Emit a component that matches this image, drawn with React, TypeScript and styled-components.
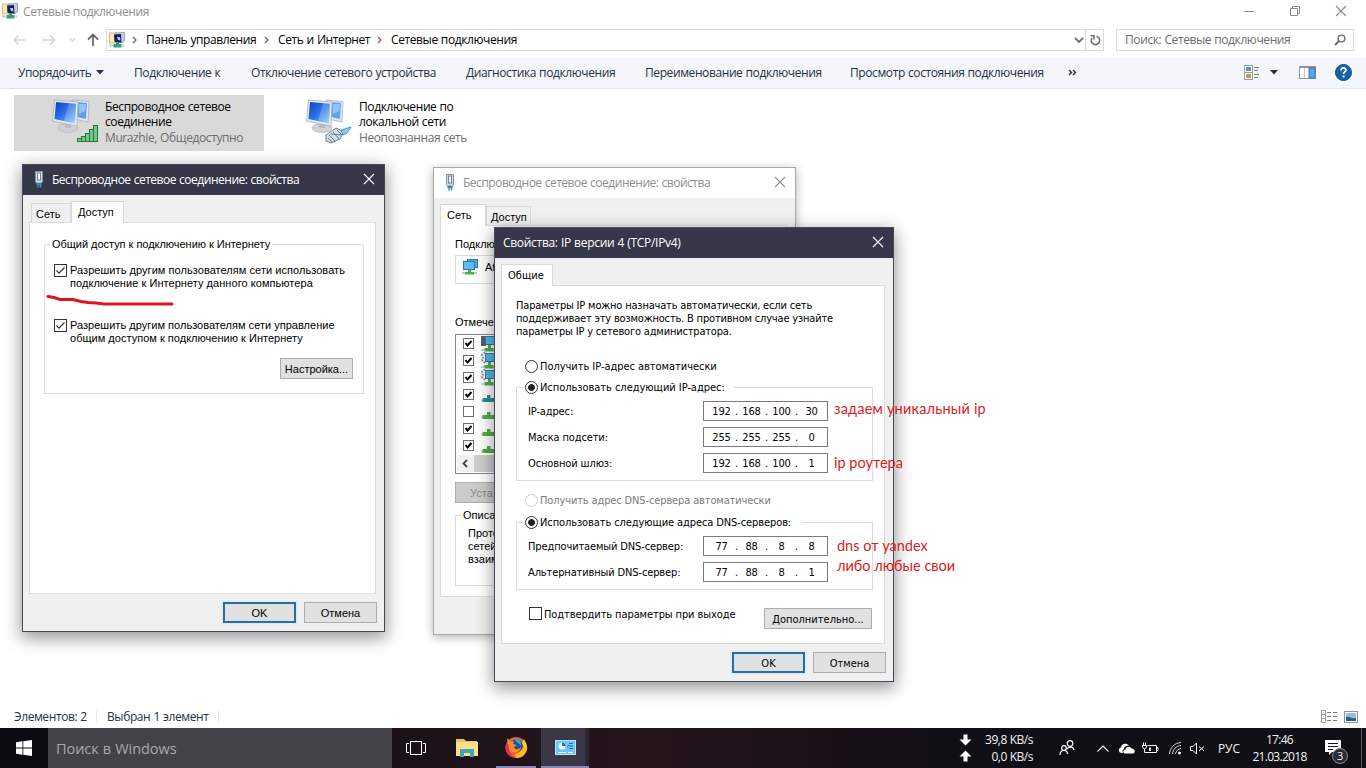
import React from "react";
import styled, { createGlobalStyle } from "styled-components";

const GlobalStyle = createGlobalStyle`
  * {
    box-sizing: border-box;
  }
  body {
    margin: 0;
    overflow: hidden;
  }
  svg {
    display: block;
    flex: none;
  }
`;

const segoe = `"Open Sans", "Noto Sans", sans-serif`;
const tahoma = `"DejaVu Sans Condensed", "DejaVu Sans", sans-serif`;
const msSans = `"Liberation Sans", Arial, sans-serif`;

const Desktop = styled.div`
  position: relative;
  display: flex;
  flex-direction: column;
  width: 1366px;
  height: 768px;
  overflow: hidden;
  background: #fff;
  font-family: ${segoe};
  font-size: 12px;
  letter-spacing: -0.4px;
  word-spacing: 0.4px;
  color: #111;
  white-space: nowrap;
`;

/* ---------- explorer window ---------- */

const Caption = styled.header`
  display: flex;
  align-items: center;
  height: 24px;
  padding: 0 19px 3px 2px;
  gap: 5px;
  color: #8f8f8f;
`;

const CaptionText = styled.span`
  padding-top: 2px;
`;

const WindowButtons = styled.div`
  display: flex;
  gap: 34px;
  margin-left: auto;
`;

const AddressRow = styled.div`
  display: flex;
  align-items: center;
  height: 34px;
  padding: 0 12px 2px 12px;
`;

const NavArrows = styled.div`
  display: flex;
  align-items: center;
  width: 94px;
`;

const AddressBox = styled.div`
  display: flex;
  align-items: center;
  width: 998px;
  height: 22px;
  border: 1px solid #d9d9d9;
  padding-left: 2px;
`;

const Crumb = styled.span<{ $w: number }>`
  width: ${(p) => p.$w}px;
  padding: 0 0 1px 9px;
  color: #000;
`;

const RefreshCell = styled.div`
  display: flex;
  align-items: center;
  justify-content: center;
  width: 18px;
  height: 20px;
  border-left: 1px solid #d9d9d9;
`;

const Chevron = styled.div`
  margin-left: auto;
  margin-right: 1px;
`;

const SearchBox = styled.div`
  display: flex;
  align-items: center;
  justify-content: space-between;
  width: 238px;
  height: 22px;
  margin-left: 12px;
  padding: 0 7px 1px 8px;
  border: 1px solid #d9d9d9;
  color: #6d6d6d;
`;

const CommandBar = styled.div`
  display: flex;
  align-items: center;
  height: 31px;
  padding: 0 14px 1px 18px;
  background: #f4f6f9;
  border-bottom: 1px solid #e3e5e8;
  color: #1e3248;
`;

const Command = styled.span<{ $w: number }>`
  display: flex;
  align-items: center;
  gap: 5px;
  width: ${(p) => p.$w}px;
`;

const ViewTools = styled.div`
  display: flex;
  align-items: center;
  margin-left: auto;
`;

const Gap = styled.span<{ $w: number }>`
  width: ${(p) => p.$w}px;
`;

const Items = styled.main`
  display: flex;
  flex: 1;
  align-items: flex-start;
  gap: 4px;
  padding: 6px 14px;
`;

const Item = styled.div<{ $selected?: boolean }>`
  display: flex;
  width: 250px;
  height: 56px;
  padding: 4px 0 0 38px;
  gap: 3px;
  background: ${(p) => (p.$selected ? "#d9d9d9" : "transparent")};
`;

const ItemText = styled.div`
  line-height: 15px;
  color: #000;
`;

const ItemNote = styled.div`
  line-height: 17px;
  color: #6d6d6d;
`;

const StatusBar = styled.footer`
  display: flex;
  align-items: center;
  height: 23px;
  padding: 0 8px 0 14px;
  color: #1e3248;
`;

const StatusCell = styled.span<{ $w: number }>`
  width: ${(p) => p.$w}px;
  height: 13px;
  line-height: 13px;
  margin-right: 10px;
  border-right: 1px solid #e9e9e9;
`;

/* ---------- taskbar ---------- */

const Taskbar = styled.div`
  display: flex;
  align-items: center;
  height: 40px;
  background: linear-gradient(90deg, #0c0b12 0 48px, #1b1218 392px, #24151b 650px, #1a1117 830px, #100f16 960px);
  color: #f2f2f2;
`;

const StartButton = styled.div`
  display: flex;
  justify-content: center;
  width: 48px;
`;

const TaskSearch = styled.div`
  display: flex;
  align-items: center;
  width: 344px;
  height: 40px;
  padding-left: 8px;
  background: #434247;
  color: #a9a9ac;
  font-size: 14.5px;
  letter-spacing: -0.05px;
`;

const TaskButton = styled.div<{ $w?: number; $open?: boolean; $active?: boolean }>`
  display: flex;
  align-items: center;
  justify-content: center;
  width: ${(p) => p.$w ?? 48}px;
  height: 40px;
  margin-right: ${(p) => (p.$open && !p.$active ? 5 : 0)}px;
  background: ${(p) =>
    p.$active ? "linear-gradient(90deg, #3b3747 44px, #2a2632 44px)" : "transparent"};
  border-bottom: ${(p) => (p.$open ? "2px solid #8d86b5" : "none")};
`;

const Tray = styled.div`
  display: flex;
  align-items: center;
  height: 40px;
  margin-left: auto;
`;

const TrayStack = styled.div<{ $w: number; $align: string; $ls?: number }>`
  width: ${(p) => p.$w}px;
  text-align: ${(p) => p.$align};
  line-height: 17px;
  font-size: 12px;
  letter-spacing: ${(p) => p.$ls ?? -0.5}px;
`;

const Notifications = styled.div`
  position: relative;
  width: 28px;
  height: 24px;
  margin-top: 7px;
`;

const Badge = styled.span`
  position: absolute;
  left: 7px;
  top: 8px;
  width: 16px;
  height: 16px;
  border: 1px solid #8b8b93;
  border-radius: 50%;
  background: #2b2a36;
  text-align: center;
  font-size: 11px;
  line-height: 14px;
`;

const ShowDesktop = styled.div`
  width: 5px;
  height: 40px;
  border-left: 1px solid #5b5a60;
`;

/* ---------- dialogs ---------- */

const Dialog = styled.section<{ $x: number; $y: number; $w: number; $h: number; $inactive?: boolean; $font: string }>`
  position: absolute;
  left: ${(p) => p.$x}px;
  top: ${(p) => p.$y}px;
  display: flex;
  flex-direction: column;
  width: ${(p) => p.$w}px;
  height: ${(p) => p.$h}px;
  border: 1px solid ${(p) => (p.$inactive ? "#a9a9a9" : "#47475a")};
  background: #f0f0f0;
  box-shadow: ${(p) =>
    p.$inactive ? "0 2px 9px rgba(0,0,0,.3)" : "0 5px 16px 1px rgba(0,0,0,.42)"};
  font-family: ${(p) => p.$font};
  font-size: 11px;
  line-height: 13px;
  letter-spacing: 0;
  word-spacing: 0;
  color: #000;
`;

const DialogTitle = styled.div<{ $inactive?: boolean; $pad: number; $ls?: number }>`
  display: flex;
  align-items: center;
  flex: none;
  height: 30px;
  padding: 0 9px 1px ${(p) => p.$pad}px;
  gap: 7px;
  background: ${(p) => (p.$inactive ? "#fff" : "#37374a")};
  color: ${(p) => (p.$inactive ? "#8f8f8f" : "#fff")};
  font-family: ${segoe};
  font-size: 12px;
  letter-spacing: ${(p) => p.$ls ?? -0.48}px;
  word-spacing: 0.4px;

  svg:last-child {
    margin: -1px 0 0 auto;
  }
`;

const Tabs = styled.div`
  display: flex;
  flex: none;
  align-items: flex-end;
  height: 27px;
  padding-left: 6px;
`;

const Tab = styled.div<{ $w: number; $active?: boolean }>`
  width: ${(p) => p.$w}px;
  height: ${(p) => (p.$active ? 22 : 19)}px;
  margin-bottom: ${(p) => (p.$active ? -1 : 0)}px;
  padding-top: ${(p) => (p.$active ? 4 : 4)}px;
  padding-left: ${(p) => (p.$active ? 6 : 4)}px;
  border: 1px solid #d9d9d9;
  border-bottom: none;
  background: ${(p) => (p.$active ? "#fff" : "#f0f0f0")};
  z-index: ${(p) => (p.$active ? 1 : 0)};
`;

const Panel = styled.div<{ $h: number; $pad: string }>`
  flex: none;
  height: ${(p) => p.$h}px;
  margin: 0 8px 0 6px;
  padding: ${(p) => p.$pad};
  border: 1px solid #dcdcdc;
  background: #fff;
`;

const Group = styled.fieldset<{ $h: number; $pad: string; $mt?: number }>`
  height: ${(p) => p.$h}px;
  min-width: 0;
  margin: ${(p) => p.$mt ?? 0}px 0 0;
  padding: ${(p) => p.$pad};
  border: 1px solid #dcdcdc;
`;

const Legend = styled.legend<{ $w?: number; $ml: number }>`
  width: ${(p) => (p.$w ? `${p.$w}px` : "auto")};
  margin-left: ${(p) => p.$ml}px;
  padding: 0 ${(p) => (p.$w ? 0 : 2)}px;
`;

const Check = styled.div<{ $mt?: number }>`
  display: flex;
  gap: 3px;
  margin-top: ${(p) => p.$mt ?? 0}px;
`;

const Button = styled.div<{ $w: number; $primary?: boolean; $disabled?: boolean }>`
  display: flex;
  flex: none;
  align-items: center;
  justify-content: center;
  width: ${(p) => p.$w}px;
  height: 21px;
  padding-top: 1px;
  border: ${(p) => (p.$primary ? "2px solid #3a6a8e" : "1px solid #adadad")};
  background: ${(p) => (p.$disabled ? "#cccccc" : "#e1e1e1")};
  color: ${(p) => (p.$disabled ? "#8a8a8a" : "#000")};
  box-shadow: ${(p) =>
    p.$primary ? "0 0 2px 1px #c9ecfa, inset 0 0 2px 1px #c3e7f7" : "none"};
`;

const InstallButton = styled(Button)`
  justify-content: flex-start;
  padding-left: 14px;
`;

const Footer = styled.div`
  display: flex;
  justify-content: flex-end;
  gap: 8px;
  margin-top: 8px;
  padding-right: 7px;
`;

const ButtonRow = styled.div`
  display: flex;
  justify-content: flex-end;
  margin-top: 13px;
`;

const ConfirmRow = styled.div`
  display: flex;
  justify-content: space-between;
  margin-top: 17px;
  padding: 0 1px 0 13px;

  ${Button} {
    margin-top: 1px;
  }
`;

const ConfirmLabel = styled.div`
  display: flex;
  height: 13px;
  gap: 2px;
  line-height: 15px;
  letter-spacing: -0.1px;
`;

const AdapterBox = styled.div`
  display: flex;
  align-items: center;
  height: 29px;
  margin: 4px 0 32px;
  padding: 0 0 5px 6px;
  gap: 6px;
  border: 1px solid #dcdcdc;
`;

const ComponentList = styled.div`
  height: 140px;
  margin: 5px 0 8px;
  border: 1px solid #828790;
`;

const ComponentRow = styled.div`
  display: flex;
  align-items: center;
  gap: 7px;
  height: 17px;
  padding: 0 0 1px 7px;
`;

const ScrollTrack = styled.div`
  display: flex;
  align-items: center;
  height: 17px;
  margin: 1px 1px 0;
  background: linear-gradient(90deg, #f0f0f0 17px, #cdcdcd 17px);
`;

const Paragraph = styled.div<{ $ls: number }>`
  letter-spacing: ${(p) => p.$ls}px;
`;

const RadioLine = styled.div<{ $disabled?: boolean; $pad?: number; $mt?: number; $ls?: number }>`
  display: flex;
  align-items: center;
  height: 14px;
  gap: 2px;
  margin-top: ${(p) => p.$mt ?? 0}px;
  padding-left: ${(p) => p.$pad ?? 0}px;
  letter-spacing: ${(p) => p.$ls ?? -0.04}px;
  color: ${(p) => (p.$disabled ? "#7a7a7a" : "#000")};
`;

const Radio = styled.span<{ $on?: boolean; $disabled?: boolean }>`
  width: 13px;
  height: 13px;
  border: 1px solid ${(p) => (p.$disabled ? "#cccccc" : "#333")};
  border-radius: 50%;
  background: ${(p) => (p.$on ? "radial-gradient(circle, #222 3px, #fff 3.8px)" : "#fff")};
`;

const FieldRow = styled.div`
  display: flex;
  align-items: center;
  justify-content: space-between;
  height: 20px;
  margin-bottom: 6px;
  letter-spacing: -0.13px;
`;

const IpBox = styled.div`
  display: flex;
  align-items: center;
  width: 125px;
  height: 20px;
  padding-left: 4px;
  border: 1px solid #7a7a7a;
  letter-spacing: -0.2px;
`;

const Octet = styled.span`
  width: 27px;
  text-align: center;
`;

const Dot = styled.span`
  width: 3px;
`;

const Note = styled.div<{ $x: number; $y: number; $ls?: number }>`
  position: absolute;
  left: ${(p) => p.$x}px;
  top: ${(p) => p.$y}px;
  font-family: Lato, "Open Sans", sans-serif;
  font-size: 14.5px;
  line-height: 20px;
  letter-spacing: ${(p) => p.$ls ?? 0}px;
  word-spacing: 0;
  color: #da1c1c;
`;

const RedStroke = styled.svg`
  position: absolute;
  left: 44px;
  top: 290px;
`;

/* ---------- icons ---------- */

const NetIcon = () => (
  <svg width="16" height="16" viewBox="0 0 16 16">
    <rect x="0.500" y="1" width="7" height="10" fill="#f7ecae" stroke="#d3bd6c" />
    <path d="M6 1L15.500 0.500V9L13 11L6 9Z" fill="#c6cde0" stroke="#8b97ab" strokeWidth="0.8" />
    <path d="M5 2.500L12 2L12.500 10.500L5.500 10Z" fill="#14205f" />
    <path d="M8 5H11L11.500 8.500L9 8Z" fill="#a9c8fa" />
    <path d="M7 10H10V12H12.500V15.500H4.500V12H7Z" fill="#2f9d78" />
    <path d="M0 13.500H4.500M12.500 13.500H15.500" stroke="#b9d3c9" strokeWidth="2" />
  </svg>
);

const Close = ({ color }: { color: string }) => (
  <svg width="12" height="12" viewBox="0 0 12 12">
    <path d="M1 1L11 11M11 1L1 11" stroke={color} strokeWidth="1.1" />
  </svg>
);

const Crumbs = () => (
  <svg width="5" height="8" viewBox="0 0 5 8">
    <path d="M1 1L4 4L1 7" fill="none" stroke="#666" strokeWidth="1.300" />
  </svg>
);

const CaretDown = () => (
  <svg width="8" height="5" viewBox="0 0 8 5">
    <path d="M0 0H8L4 4.500Z" fill="#1e3248" />
  </svg>
);

const PlugIcon = () => (
  <svg width="11" height="17" viewBox="0 0 11 17">
    <path d="M1.500 0.500H8.500V10.500L7.500 12H2.500L1.500 10.500Z" fill="#cfdae3" stroke="#7f95a6" />
    <rect x="3.500" y="2" width="3" height="7" fill="#f4f8fb" stroke="#6d8496" />
    <path d="M2.500 12H7.500V14H2.500Z" fill="#4c7f9f" />
    <path d="M4 13.500V16.500M6.500 13.500V16.500" stroke="#2f9ad6" strokeWidth="1.500" />
  </svg>
);

const ConnectionIcon = ({ wired }: { wired?: boolean }) => (
  <svg width="50" height="48" viewBox="0 0 50 48">
    <defs>
      <linearGradient id="screen" x1="0" y1="0" x2="1" y2="1">
        <stop offset="0" stopColor="#0d3fc4" />
        <stop offset="0.5" stopColor="#2f74e6" />
        <stop offset="1" stopColor="#8fd0f8" />
      </linearGradient>
    </defs>
    <ellipse cx="16" cy="29" rx="10" ry="4.500" fill="#cfd1d4" stroke="#b1b3b7" strokeWidth="0.6" />
    <path d="M20 1L37 2.500L36 23L22 20Z" fill="#dfe8f2" stroke="#a4b0be" strokeWidth="0.8" />
    <path d="M25 3L35 4L34 20L25 18Z" fill="#5f9fee" />
    <path d="M27 5L34 5L33.500 12L27 15Z" fill="#a5d3fa" opacity="0.7" />
    <path d="M13 23H19V29H13Z" fill="#b9bdc3" />
    <path d="M2.500 1L26 3L25 27L0.500 22Z" fill="#e6edf5" stroke="#a4b0be" strokeWidth="0.8" />
    <path d="M4 3L24 4.800L23 24.500L2.500 20Z" fill="url(#screen)" />
    <path d="M17 4L24 4.800L23 24.500L12 22Z" fill="#fff" opacity="0.2" />
    {wired ? (
      <g stroke="#5d7184" strokeWidth="0.9">
        <path d="M20 36L30 29L38 33L34 40L25 44L20 42Z" fill="#cfdeea" />
        <path d="M23 36L29 42M27 33L33 40M22 39L26 43M31 31L36 36M25 35L35 36" fill="none" />
        <path d="M35 31L45 28L41 34L37 36Z" fill="#8fc8ea" stroke="#3e8fbf" />
      </g>
    ) : (
      <g fill="#78c487" stroke="#1f7b39">
        <rect x="25.500" y="39.500" width="4" height="3" />
        <rect x="29.500" y="37.500" width="4" height="5" />
        <rect x="33.500" y="34.500" width="4" height="8" />
        <rect x="37.500" y="30.500" width="4" height="12" />
        <rect x="41.500" y="26.500" width="4" height="16" />
      </g>
    )}
  </svg>
);

const CheckIcon = ({ on, small }: { on?: boolean; small?: boolean }) =>
  small ? (
    <svg width="11" height="11" viewBox="0 0 11 11">
      <rect x="0.5" y="0.5" width="10" height="10" fill="#fff" stroke="#707070" />
      {on && <path d="M2.500 5L4.500 7.500L8.500 3" fill="none" stroke="#000" strokeWidth="2" />}
    </svg>
  ) : (
    <svg width="13" height="13" viewBox="0 0 13 13">
      <rect x="0.5" y="0.5" width="12" height="12" fill="#fff" stroke="#333" />
      {on && <path d="M2.500 6.500L5 9.200L10.500 3.500" fill="none" stroke="#333" strokeWidth="1.200" />}
    </svg>
  );

const ComponentIcon = ({ kind }: { kind: string }) => (
  <svg width="17" height="17" viewBox="0 0 17 17">
    {kind === "teal" || kind === "green" ? (
      <>
        <path d="M0 14.500H17" stroke="#c4dcc2" strokeWidth="2" />
        <path
          d="M6 9H9.500V12H13V16H1.500V12H6Z"
          fill={kind === "teal" ? "#2f8f96" : "#4db04a"}
        />
      </>
    ) : (
      <>
        {kind === "client" ? (
          <rect x="0" y="1" width="5" height="10" fill="#555e66" />
        ) : (
          <path d="M4 0L1 3L2 6L1 8L4 11" fill="none" stroke="#8a9aa8" strokeWidth="2" strokeDasharray="2 1" />
        )}
        <rect x="4.500" y="1.500" width="14" height="8" fill="#57b5ee" stroke="#2b7db5" />
        <path d="M0 15H17" stroke="#c4dcc2" strokeWidth="2" />
        <path d="M7 10H10V13H12.500V16.500H3.500V13H7Z" fill="#4db04a" />
      </>
    )}
  </svg>
);

const AdapterIcon = () => (
  <svg width="17" height="16" viewBox="0 0 17 16">
    <rect x="5.500" y="0.5" width="10" height="8" fill="#4aa9e6" stroke="#2b79ad" />
    <rect x="1.500" y="2.500" width="11" height="8" fill="#5fbcf2" stroke="#2b79ad" />
    <path d="M0 14H15" stroke="#b4d8b2" strokeWidth="2" />
    <path d="M6 11H9V13H12V15.500H3V13H6Z" fill="#4db04a" />
  </svg>
);

const components = [
  ["client", true],
  ["gear", true],
  ["gear", true],
  ["teal", true],
  ["green", false],
  ["green", true],
  ["green", true],
] as const;

/* ---------- parts ---------- */

interface IpRowProps {
  label: string;
  ip: string;
}

const IpRow: React.FC<IpRowProps> = ({ label, ip }) => (
  <FieldRow>
    <span>{label}</span>
    <IpBox>
      {ip.split(".").map((part, i) => (
        <React.Fragment key={i}>
          {i > 0 && <Dot>.</Dot>}
          <Octet>{part}</Octet>
        </React.Fragment>
      ))}
    </IpBox>
  </FieldRow>
);

const Explorer = () => (
  <>
    <Caption>
      <NetIcon />
      <CaptionText>Сетевые подключения</CaptionText>
      <WindowButtons>
        <svg width="12" height="12" viewBox="0 0 12 12">
          <path d="M1 6.500H11" stroke="#8a8a8a" />
        </svg>
        <svg width="12" height="12" viewBox="0 0 12 12">
          <path d="M1.500 3.500H8.500V10.500H1.500ZM3.500 3.500V1.500H10.500V8.500H8.500" fill="none" stroke="#8a8a8a" />
        </svg>
        <Close color="#8a8a8a" />
      </WindowButtons>
    </Caption>
    <AddressRow>
      <NavArrows>
        <svg width="88" height="16" viewBox="0 0 88 16" fill="none">
          <path d="M6.500 3.500L2 8L6.500 12.500M2 8H13.500" stroke="#d4d4d4" strokeWidth="1.500" />
          <path d="M38 3.500L42.500 8L38 12.500M42.500 8H31" stroke="#d4d4d4" strokeWidth="1.500" />
          <path d="M58 6.500L60.500 9L63 6.500" stroke="#d4d4d4" strokeWidth="1.400" />
          <path d="M76 7.500L81 2.500L86 7.500M81 3V14" stroke="#6a6a6a" strokeWidth="1.800" />
        </svg>
      </NavArrows>
      <AddressBox>
        <NetIcon />
        <Gap $w={7} />
        <Crumbs />
        <Crumb $w={127}>Панель управления</Crumb>
        <Crumbs />
        <Crumb $w={108}>Сеть и Интернет</Crumb>
        <Crumbs />
        <Crumb $w={160}>Сетевые подключения</Crumb>
        <Chevron>
          <svg width="10" height="8" viewBox="0 0 10 8">
            <path d="M1 2L5 6L9 2" fill="none" stroke="#6d6d6d" strokeWidth="1.800" />
          </svg>
        </Chevron>
        <RefreshCell>
          <svg width="12" height="12" viewBox="0 0 12 12" fill="none" stroke="#6d6d6d" strokeWidth="1.600">
            <path d="M7.500 2.300A4.200 4.200 0 1 1 3 4M1.500 1.800H5V5.500" />
          </svg>
        </RefreshCell>
      </AddressBox>
      <SearchBox>
        <span>Поиск: Сетевые подключения</span>
        <svg width="12" height="12" viewBox="0 0 12 12" fill="none" stroke="#6d6d6d">
          <circle cx="7.500" cy="4.500" r="3.400" strokeWidth="1.400" />
          <path d="M5 7L1 11" strokeWidth="2" />
        </svg>
      </SearchBox>
    </AddressRow>
    <CommandBar>
      <Command $w={116}>
        Упорядочить <CaretDown />
      </Command>
      <Command $w={117}>Подключение к</Command>
      <Command $w={215}>Отключение сетевого устройства</Command>
      <Command $w={179}>Диагностика подключения</Command>
      <Command $w={205}>Переименование подключения</Command>
      <Command $w={218}>Просмотр состояния подключения</Command>
      <svg width="9" height="7" viewBox="0 0 9 7">
        <path d="M1 1L3.500 3.500L1 6M5 1L7.500 3.500L5 6" fill="none" stroke="#1e3248" strokeWidth="1.400" />
      </svg>
      <ViewTools>
        <svg width="15" height="15" viewBox="0 0 15 15">
          <rect x="0.5" y="0.5" width="8" height="14" fill="#fff" stroke="#9a9a9a" />
          <path d="M0.500 7.500H8" stroke="#9a9a9a" />
          <rect x="2" y="2" width="5" height="4" fill="#5c8fc4" />
          <rect x="2" y="9" width="5" height="4" fill="#b5a04a" />
          <path d="M10 2.500H15M10 5.500H14M10 9.500H15M10 12.500H14" stroke="#7a7a7a" />
        </svg>
        <Gap $w={11} />
        <CaretDown />
        <Gap $w={21} />
        <svg width="17" height="13" viewBox="0 0 17 13">
          <rect x="0.5" y="0.5" width="16" height="12" fill="#fff" stroke="#8f979f" />
          <path d="M0.500 1.500H16" stroke="#8f979f" />
          <path d="M5.500 2V12" stroke="#c8ccd0" />
          <rect x="10" y="2" width="6" height="10" fill="#58a6e6" stroke="#2c7cc0" />
        </svg>
        <Gap $w={19} />
        <svg width="17" height="17" viewBox="0 0 17 17">
          <circle cx="8.500" cy="8.500" r="8" fill="#1463a8" stroke="#0c4a85" />
          <path d="M6 6.500C6 3 11 3.300 11 6C11 8 8.500 7.800 8.500 10" fill="none" stroke="#fff" strokeWidth="1.700" />
          <rect x="7.600" y="11.500" width="1.900" height="1.900" fill="#fff" />
        </svg>
      </ViewTools>
    </CommandBar>
    <Items>
      <Item $selected>
        <ConnectionIcon />
        <ItemText>
          Беспроводное сетевое
          <br />
          соединение
          <ItemNote>Murazhie, Общедоступно</ItemNote>
        </ItemText>
      </Item>
      <Item>
        <ConnectionIcon wired />
        <ItemText>
          Подключение по
          <br />
          локальной сети
          <ItemNote>Неопознанная сеть</ItemNote>
        </ItemText>
      </Item>
    </Items>
    <StatusBar>
      <StatusCell $w={83}>Элементов: 2</StatusCell>
      <StatusCell $w={112}>Выбран 1 элемент</StatusCell>
      <ViewTools>
        <svg width="17" height="13" viewBox="0 0 17 13">
          <path d="M0.500 0.500H4.500V12.500H0.500ZM0.500 4.500H4.500M0.500 8.500H4.500" fill="none" stroke="#999" />
          <path d="M6 2.500H10M12 2.500H16M6 6.500H10M12 6.500H16M6 10.500H10M12 10.500H16" stroke="#777" />
        </svg>
        <Gap $w={6} />
        <svg width="14" height="12" viewBox="0 0 14 12">
          <rect x="0.500" y="0.500" width="13" height="11" fill="#fff" stroke="#8d9299" />
          <rect x="2" y="2" width="10" height="8" fill="#8fc0ea" />
          <path d="M2 6C5 5 8 8 12 7V10H2Z" fill="#2d5f7c" />
        </svg>
      </ViewTools>
    </StatusBar>
  </>
);

const TaskbarView = () => (
  <Taskbar>
    <StartButton>
      <svg width="16" height="16" viewBox="0 0 16 16" fill="#fff">
        <path d="M0 2.200L6.500 1.300V7.600H0ZM7.300 1.200L16 0V7.600H7.300ZM0 8.400H6.500V14.700L0 13.800ZM7.300 8.400H16V16L7.300 14.800Z" />
      </svg>
    </StartButton>
    <TaskSearch>Поиск в Windows</TaskSearch>
    <TaskButton>
      <svg width="20" height="14" viewBox="0 0 20 14" fill="none" stroke="#fff">
        <rect x="4.500" y="0.500" width="11" height="13" />
        <path d="M3 2.500H0.500V11.500H3M17 2.500H19.500V11.500H17" />
      </svg>
    </TaskButton>
    <TaskButton $w={54}>
      <svg width="22" height="18" viewBox="0 0 22 18">
        <path d="M0 0H8L10 2H21V17H0Z" fill="#e9c45c" />
        <path d="M0 3H22V17H0Z" fill="#fbe08d" />
        <path d="M4 18V10H18V18H14V14H8V18Z" fill="#3fa7b5" />
      </svg>
    </TaskButton>
    <Gap $w={2} />
    <TaskButton $w={40} $open>
      <svg width="24" height="24" viewBox="0 0 24 24">
        <circle cx="12" cy="12.500" r="10.500" fill="#f4612c" />
        <path d="M12 23A10.500 10.500 0 0 0 20 5C22 10 18 18 11 19Z" fill="#fbb827" />
        <path d="M2 9A10.500 10.500 0 0 0 12 23C7 21 4 17 5 8Z" fill="#e32b4c" />
        <circle cx="12.500" cy="10.500" r="6.300" fill="#1b4fa0" />
        <path d="M10 4C15 2 18 7 17 11C15 8 13 8 10 4Z" fill="#2fa5d8" />
        <path d="M3 3L7 7L10 6L9 9L13 10L10 12C11 15 14 15 17 12C17 17 9 20 5 14Z" fill="#ff8b24" />
        <path d="M20 4L22 9L21 14L18 8Z" fill="#ffd43a" />
      </svg>
    </TaskButton>
    <TaskButton $open $active>
      <svg width="21" height="15" viewBox="0 0 21 15">
        <rect x="0.500" y="0.500" width="20" height="14" fill="#6fc6f2" stroke="#b8e3f8" />
        <circle cx="7" cy="6" r="3.500" fill="#e6f6fd" />
        <path d="M7 6V2.500A3.500 3.500 0 0 1 10.500 6Z" fill="#1f6fb2" />
        <path d="M12 7L14 5M14 3.500H18M14 6H18M14 8.500H18" stroke="#1f6fb2" />
        <path d="M3 12.500H11M13 12.500H18" stroke="#e6f6fd" />
      </svg>
    </TaskButton>
    <Tray>
      <svg width="13" height="28" viewBox="0 0 13 28" fill="#fff">
        <path d="M4.500 0.500H8.500V5.500H12.500L6.500 11.500L0.500 5.500H4.500Z" />
        <path d="M4.500 27.500H8.500V22.500H12.500L6.500 16.500L0.500 22.500H4.500Z" />
      </svg>
      <TrayStack $w={61} $align="right">
        39,8 KB/s
        <br />
        0,0 KB/s
      </TrayStack>
      <Gap $w={26} />
      <svg width="16" height="16" viewBox="0 0 16 16" fill="none" stroke="#fff" strokeWidth="1.200">
        <circle cx="11" cy="3.500" r="2.800" />
        <circle cx="5" cy="8" r="2.300" />
        <path d="M1 15C1 11 3 10.500 5 10.500S8.500 12 8.500 14M8 9C9 7 14 5.500 15 10" />
      </svg>
      <Gap $w={22} />
      <svg width="12" height="7" viewBox="0 0 12 7">
        <path d="M0.500 6.500L6 1L11.500 6.500" fill="none" stroke="#fff" strokeWidth="1.200" />
      </svg>
      <Gap $w={9} />
      <svg width="18" height="11" viewBox="0 0 18 11" fill="#fff">
        <path d="M4 10C0 10 0 5 3 4.500C3 1 8 -1 11 2.500C8 2.500 6 4 6 6C4.500 6.500 4 8.500 5 10Z" />
        <path d="M7 10.500C4.500 10 5 6.500 7.500 6.500C8 3 12.500 3 13.500 5.500C17 5 18 10 15 10.500Z" />
      </svg>
      <Gap $w={6} />
      <svg width="17" height="13" viewBox="0 0 17 13" fill="none" stroke="#fff">
        <path d="M5.500 3.500H14.500V10.500H4M14.500 5.500H16V8.500H14.500M1.500 0.500V3M3.500 0.500V3M0.500 3.500H4.500V5.500L2.500 7L0.500 5.500ZM2.500 7V10.500H5" />
        <path d="M7 5.500H9V9H7Z" fill="#fff" stroke="none" />
      </svg>
      <Gap $w={10} />
      <svg width="13" height="13" viewBox="0 0 13 13" fill="none" stroke="#d8d8d8">
        <path d="M0.500 12C1 5.500 5.500 1 12 0.500M3.500 12C4 7 7 4 12 3.500M6.500 12C7 9 9 7 12 6.500" />
        <circle cx="10.500" cy="11" r="1.500" fill="#fff" stroke="none" />
      </svg>
      <Gap $w={8} />
      <svg width="15" height="13" viewBox="0 0 15 13" fill="none" stroke="#fff">
        <path d="M0.500 4.500H3L6.500 1V12L3 8.500H0.500ZM9 4.500L14 9M14 4.500L9 9" />
      </svg>
      <Gap $w={13} />
      <TrayStack $w={31} $align="left" $ls={-0.1}>
        РУС
      </TrayStack>
      <TrayStack $w={61} $align="center" $ls={-0.7}>
        17:46
        <br />
        21.03.2018
      </TrayStack>
      <Gap $w={15} />
      <Notifications>
        <svg width="17" height="16" viewBox="0 0 17 16">
          <path d="M0 0H16V12H7L4 15V12H0Z" fill="#fff" />
          <path d="M3 3.500H13M3 6.500H13M3 9.500H8" stroke="#15141b" />
        </svg>
        <Badge>3</Badge>
      </Notifications>
      <Gap $w={8} />
      <ShowDesktop />
    </Tray>
  </Taskbar>
);

const SharingDialog = () => (
  <Dialog $x={22} $y={164} $w={363} $h={468} $font={msSans}>
    <DialogTitle $pad={11}>
      <PlugIcon />
      <span>Беспроводное сетевое соединение: свойства</span>
      <Close color="#fff" />
    </DialogTitle>
    <Tabs>
      <Gap $w={2} />
      <Tab $w={40}>Сеть</Tab>
      <Tab $w={53} $active>
        Доступ
      </Tab>
    </Tabs>
    <Panel $h={372} $pad="15px 11px 0 14px">
      <Group $h={156} $pad="13px 10px 0 9px">
        <Legend $ml={-4}>
          <Paragraph $ls={-0.03}>Общий доступ к подключению к Интернету</Paragraph>
        </Legend>
        <Check>
          <CheckIcon on />
          <Paragraph $ls={0.05}>
            Разрешить другим пользователям сети использовать
            <br />
            подключение к Интернету данного компьютера
          </Paragraph>
        </Check>
        <Check $mt={29}>
          <CheckIcon on />
          <Paragraph $ls={0.02}>
            Разрешить другим пользователям сети управление
            <br />
            общим доступом к подключению к Интернету
          </Paragraph>
        </Check>
        <ButtonRow>
          <Button $w={73}>Настройка...</Button>
        </ButtonRow>
      </Group>
    </Panel>
    <Footer>
      <Button $w={73} $primary>
        OK
      </Button>
      <Button $w={73}>Отмена</Button>
    </Footer>
  </Dialog>
);

// mostly covered by the TCP/IP dialog, so its lines are kept short
const NetworkDialog = () => (
  <Dialog $x={433} $y={167} $w={363} $h={468} $inactive $font={msSans}>
    <DialogTitle $inactive $pad={11}>
      <PlugIcon />
      <span>Беспроводное сетевое соединение: свойства</span>
      <Close color="#8f8f8f" />
    </DialogTitle>
    <Tabs>
      <Tab $w={46} $active>
        Сеть
      </Tab>
      <Tab $w={45}>Доступ</Tab>
    </Tabs>
    <Panel $h={372} $pad="12px 11px 0 14px">
      <div>Подклю</div>
      <AdapterBox>
        <AdapterIcon />
        <span>At</span>
      </AdapterBox>
      <div>Отмечен</div>
      <ComponentList>
        {components.map(([kind, on], i) => (
          <ComponentRow key={i}>
            <CheckIcon small on={on} />
            <ComponentIcon kind={kind} />
          </ComponentRow>
        ))}
        <ScrollTrack>
          <svg width="17" height="9" viewBox="0 0 17 9">
            <path d="M10 1L6.500 4.500L10 8" fill="none" stroke="#444" strokeWidth="1.800" />
          </svg>
        </ScrollTrack>
      </ComponentList>
      <InstallButton $w={100} $disabled>
        Уста
      </InstallButton>
      <Group $h={77} $pad="5px 0 0 12px" $mt={6}>
        <Legend $ml={-7}>Описа</Legend>
        Прото
        <br />
        сетей
        <br />
        взаим
      </Group>
    </Panel>
  </Dialog>
);

const IpDialog = () => (
  <Dialog $x={494} $y={227} $w={400} $h={455} $font={tahoma}>
    <DialogTitle $pad={8} $ls={-0.3}>
      <span>Свойства: IP версии 4 (TCP/IPv4)</span>
      <Close color="#fff" />
    </DialogTitle>
    <Tabs>
      <Tab $w={52} $active>
        Общие
      </Tab>
    </Tabs>
    <Panel $h={359} $pad="13px 11px 0 14px">
      <Paragraph $ls={-0.18}>
        Параметры IP можно назначать автоматически, если сеть
        <br />
        поддерживает эту возможность. В противном случае узнайте
        <br />
        параметры IP у сетевого администратора.
      </Paragraph>
      <RadioLine $pad={9} $mt={21}>
        <Radio />
        Получить IP-адрес автоматически
      </RadioLine>
      <Group $h={101} $pad="7px 44px 0 11px" $mt={7}>
        <Legend $w={209} $ml={-3}>
          <RadioLine>
            <Radio $on />
            Использовать следующий IP-адрес:
          </RadioLine>
        </Legend>
        <IpRow label="IP-адрес:" ip="192.168.100.30" />
        <IpRow label="Маска подсети:" ip="255.255.255.0" />
        <IpRow label="Основной шлюз:" ip="192.168.100.1" />
      </Group>
      <RadioLine $pad={9} $mt={12} $ls={-0.13} $disabled>
        <Radio $disabled />
        Получить адрес DNS-сервера автоматически
      </RadioLine>
      <Group $h={75} $pad="7px 44px 0 11px" $mt={8}>
        <Legend $w={278} $ml={-3}>
          <RadioLine $ls={-0.1}>
            <Radio $on />
            Использовать следующие адреса DNS-серверов:
          </RadioLine>
        </Legend>
        <IpRow label="Предпочитаемый DNS-сервер:" ip="77.88.8.8" />
        <IpRow label="Альтернативный DNS-сервер:" ip="77.88.8.1" />
      </Group>
      <ConfirmRow>
        <ConfirmLabel>
          <CheckIcon />
          Подтвердить параметры при выходе
        </ConfirmLabel>
        <Button $w={108}>Дополнительно...</Button>
      </ConfirmRow>
    </Panel>
    <Footer>
      <Button $w={73} $primary>
        OK
      </Button>
      <Button $w={73}>Отмена</Button>
    </Footer>
  </Dialog>
);

const App = () => (
  <Desktop>
    <GlobalStyle />
    <Explorer />
    <TaskbarView />
    <SharingDialog />
    <NetworkDialog />
    <IpDialog />
    <RedStroke width="134" height="20" viewBox="0 0 134 20">
      <path
        d="M4 6.500L10 7.500L16 9.500H29L37 11.500L44 12.500L52 13L60 14H72H128"
        fill="none"
        stroke="#e0141a"
        strokeWidth="3"
        strokeLinecap="round"
      />
    </RedStroke>
    <Note $x={834} $y={399} $ls={0.2}>
      задаем уникальный ip
    </Note>
    <Note $x={834} $y={453}>
      ip роутера
    </Note>
    <Note $x={837} $y={536}>
      dns от yandex
      <br />
      либо любые свои
    </Note>
  </Desktop>
);

export default App;
